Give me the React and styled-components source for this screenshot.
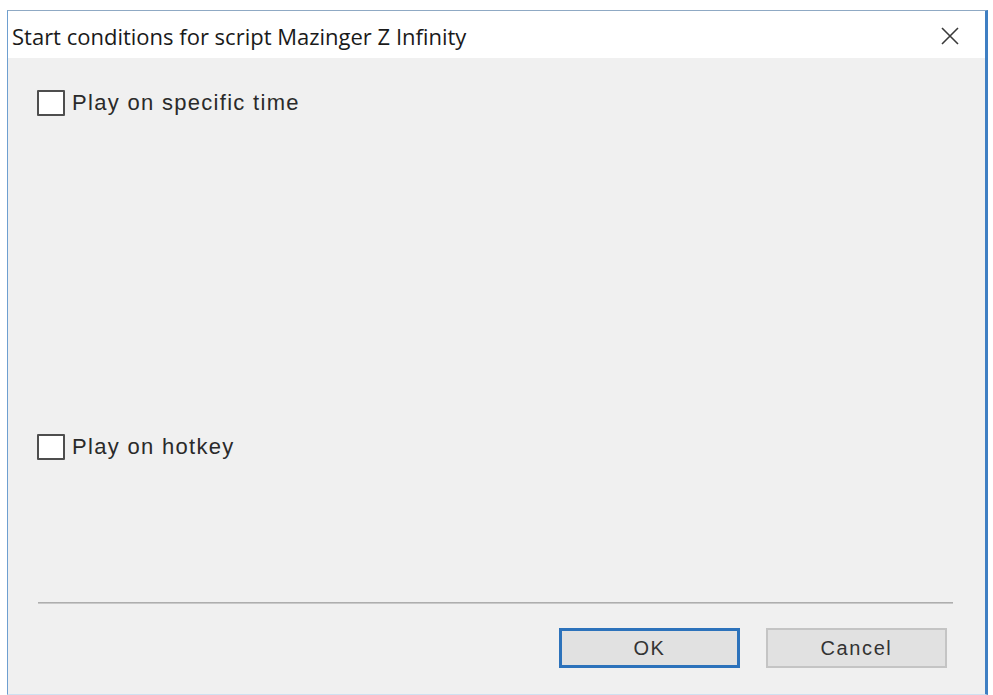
import React from "react";
import styled, { createGlobalStyle } from "styled-components";

const GlobalStyle = createGlobalStyle`
  html, body {
    margin: 0;
    padding: 0;
    background: #ffffff;
  }
  body {
    font-family: "Open Sans", "Liberation Sans", sans-serif;
  }
`;

export default function App() {
  return (
    <>
      <GlobalStyle />
      <Page>
        <Window>
          <TitleBar>
            <Title>Start conditions for script Mazinger Z Infinity</Title>
            <CloseButton aria-label="Close">
              <svg width="18" height="18" viewBox="0 0 18 18">
                <path d="M1 1 L17 17 M17 1 L1 17" stroke="#3a3a3a" strokeWidth="1.6" fill="none" />
              </svg>
            </CloseButton>
          </TitleBar>
          <Body>
            <Section $height={344}>
              <CheckRow>
                <Box />
                <Label>Play on specific time</Label>
              </CheckRow>
            </Section>
            <Section $height={200}>
              <CheckRow>
                <Box />
                <Label>Play on hotkey</Label>
              </CheckRow>
            </Section>
            <Separator />
            <Footer>
              <Button $primary>OK</Button>
              <Button>Cancel</Button>
            </Footer>
          </Body>
        </Window>
      </Page>
    </>
  );
}

const Page = styled.div`
  width: 993px;
  height: 695px;
  padding: 10px 0 0 7px;
  box-sizing: border-box;
  overflow: hidden;
`;

const Window = styled.div`
  width: 981px;
  height: 685px;
  box-sizing: border-box;
  border-top: 1px solid #8fa9c4;
  border-left: 1px solid #6e9fd0;
  border-right: 3px solid #3f7fc3;
  border-bottom: 1px solid #cfe0f0;
  background: #f0f0f0;
  display: flex;
  flex-direction: column;
`;

const TitleBar = styled.div`
  height: 47px;
  background: #ffffff;
  display: flex;
  align-items: center;
  justify-content: space-between;
  padding: 2px 20px 0 4px;
  box-sizing: border-box;
  flex-shrink: 0;
`;

const Title = styled.span`
  font-family: "Open Sans", "Liberation Sans", sans-serif;
  font-size: 22px;
  color: #1a1a1a;
`;

const CloseButton = styled.div`
  width: 30px;
  height: 30px;
  display: flex;
  align-items: center;
  justify-content: center;
`;

const Body = styled.div`
  flex: 1;
  display: flex;
  flex-direction: column;
  padding: 0 32px 0 29px;
`;

const Section = styled.div`
  height: ${(p) => p.$height}px;
  padding-top: 32px;
  box-sizing: border-box;
`;

const CheckRow = styled.div`
  display: flex;
  align-items: center;
  gap: 7px;
`;

const Box = styled.div`
  width: 24px;
  height: 22px;
  border: 2px solid #4e4e4e;
  background: #ffffff;
  border-radius: 1px;
`;

const Label = styled.span`
  font-family: "Liberation Sans", Arial, sans-serif;
  font-size: 22px;
  letter-spacing: 1.3px;
  color: #2a2a2a;
`;

const Separator = styled.div`
  height: 2px;
  margin-left: 1px;
  background: linear-gradient(#a0a0a0, #d6d6d6);
`;

const Footer = styled.div`
  display: flex;
  justify-content: flex-end;
  gap: 26px;
  padding: 24px 6px 0 0;
`;

const Button = styled.div`
  width: 181px;
  height: 40px;
  box-sizing: border-box;
  display: flex;
  align-items: center;
  justify-content: center;
  background: #e1e1e1;
  border: ${(p) => (p.$primary ? "3px solid #2c72bb" : "2px solid #c4c4c4")};
  font-family: "Liberation Sans", Arial, sans-serif;
  font-size: 20px;
  letter-spacing: 1.6px;
  color: #333333;
`;
